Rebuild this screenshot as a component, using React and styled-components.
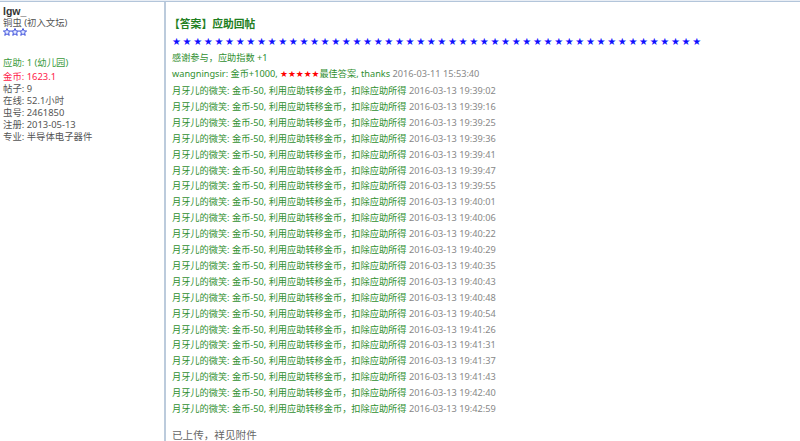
import React from "react";
import styled, { createGlobalStyle } from "styled-components";

const Global = createGlobalStyle`
  html, body { margin: 0; padding: 0; background: #fff; }
  body { font-family: "Noto Sans", "Noto Sans CJK SC", sans-serif; }
`;

const Page = styled.div`
  width: 800px;
  height: 441px;
  overflow: hidden;
  display: flex;
  flex-direction: column;
  background: #fff;
`;

const TopBand = styled.div`
  height: 2px;
  background: #e9eef5;
  border-bottom: 1px solid #b3c5da;
`;

const Body = styled.div`
  flex: 1;
  display: grid;
  grid-template-columns: 166px 1fr;
`;

const Side = styled.div`
  border-right: 2px solid #bccbdc;
  padding: 3px 0 0 3px;
  font-size: 9.4px;
  line-height: 11px;
  color: #555;
`;

const UserName = styled.div`
  font-family: "Liberation Sans", sans-serif;
  font-weight: bold;
  font-size: 10.5px;
  color: #333;
  line-height: 12px;
`;

const Rank = styled.div`
  color: #555;
`;

const StarIcons = styled.div`
  display: flex;
  height: 9px;
`;

const Stats = styled.div`
  margin-top: 20px;
  display: flex;
  flex-direction: column;
`;

const Stat = styled.div`
  line-height: 12.1px;
  color: ${(p) => p.$color || "#555"};
  margin-bottom: ${(p) => (p.$gap ? "1.5px" : "0")};
`;

const Main = styled.div`
  padding: 15px 0 0 6px;
  font-size: 9.2px;
  color: #2f8f2f;
`;

const Title = styled.div`
  font-size: 10.8px;
  font-weight: bold;
  color: #1f7f1f;
  line-height: 13px;
  margin-left: -3px;
`;

const BlueStars = styled.div`
  margin-top: 6px;
  font-family: "DejaVu Sans", sans-serif;
  font-size: 10px;
  color: #1010ff;
  line-height: 12px;
  white-space: nowrap;
  letter-spacing: 1.65px;
`;

const Log = styled.div`
  margin-top: 2px;
  display: flex;
  flex-direction: column;
`;

const Line = styled.div`
  line-height: 15.9px;
  white-space: nowrap;
  color: #2f8f2f;
`;

const Time = styled.span`
  color: #888;
`;

const RedStars = styled.span`
  font-family: "DejaVu Sans", sans-serif;
  font-size: 8.8px;
  color: #f00;
`;

const Note = styled.div`
  margin-top: 12px;
  font-size: 10.6px;
  color: #666;
  line-height: 12px;
`;

const OutlineStar = () => (
  <svg width="8" height="8" viewBox="0 0 10 10">
    <polygon
      points="5,0.6 6.3,3.6 9.5,3.8 7,5.9 7.8,9.2 5,7.4 2.2,9.2 3,5.9 0.5,3.8 3.7,3.6"
      fill="#dfe6ff"
      stroke="#2a3fd8"
      strokeWidth="1.1"
      strokeLinejoin="round"
    />
  </svg>
);

const times = [
  "19:39:02", "19:39:16", "19:39:25", "19:39:36", "19:39:41", "19:39:47",
  "19:39:55", "19:40:01", "19:40:06", "19:40:22", "19:40:29", "19:40:35",
  "19:40:43", "19:40:48", "19:40:54", "19:41:26", "19:41:31", "19:41:37",
  "19:41:43", "19:42:40", "19:42:59",
];

export default function App() {
  return (
    <Page>
      <Global />
      <TopBand />
      <Body>
        <Side>
          <UserName>lgw_</UserName>
          <Rank>铜虫 (初入文坛)</Rank>
          <StarIcons>
            <OutlineStar />
            <OutlineStar />
            <OutlineStar />
          </StarIcons>
          <Stats>
            <Stat $color="#3a9a3a" $gap>应助: 1 (幼儿园)</Stat>
            <Stat $color="#ff1a4a">金币: 1623.1</Stat>
            <Stat>帖子: 9</Stat>
            <Stat>在线: 52.1小时</Stat>
            <Stat>虫号: 2461850</Stat>
            <Stat>注册: 2013-05-13</Stat>
            <Stat>专业: 半导体电子器件</Stat>
          </Stats>
        </Side>
        <Main>
          <Title>【答案】应助回帖</Title>
          <BlueStars>{"★".repeat(50)}</BlueStars>
          <Log>
            <Line>感谢参与，应助指数 +1</Line>
            <Line>
              wangningsir: 金币+1000, <RedStars>★★★★★</RedStars>最佳答案, thanks{" "}
              <Time>2016-03-11 15:53:40</Time>
            </Line>
            {times.map((t) => (
              <Line key={t}>
                月牙儿的微笑: 金币-50, 利用应助转移金币，扣除应助所得{" "}
                <Time>2016-03-13 {t}</Time>
              </Line>
            ))}
          </Log>
          <Note>已上传，祥见附件</Note>
        </Main>
      </Body>
    </Page>
  );
}
